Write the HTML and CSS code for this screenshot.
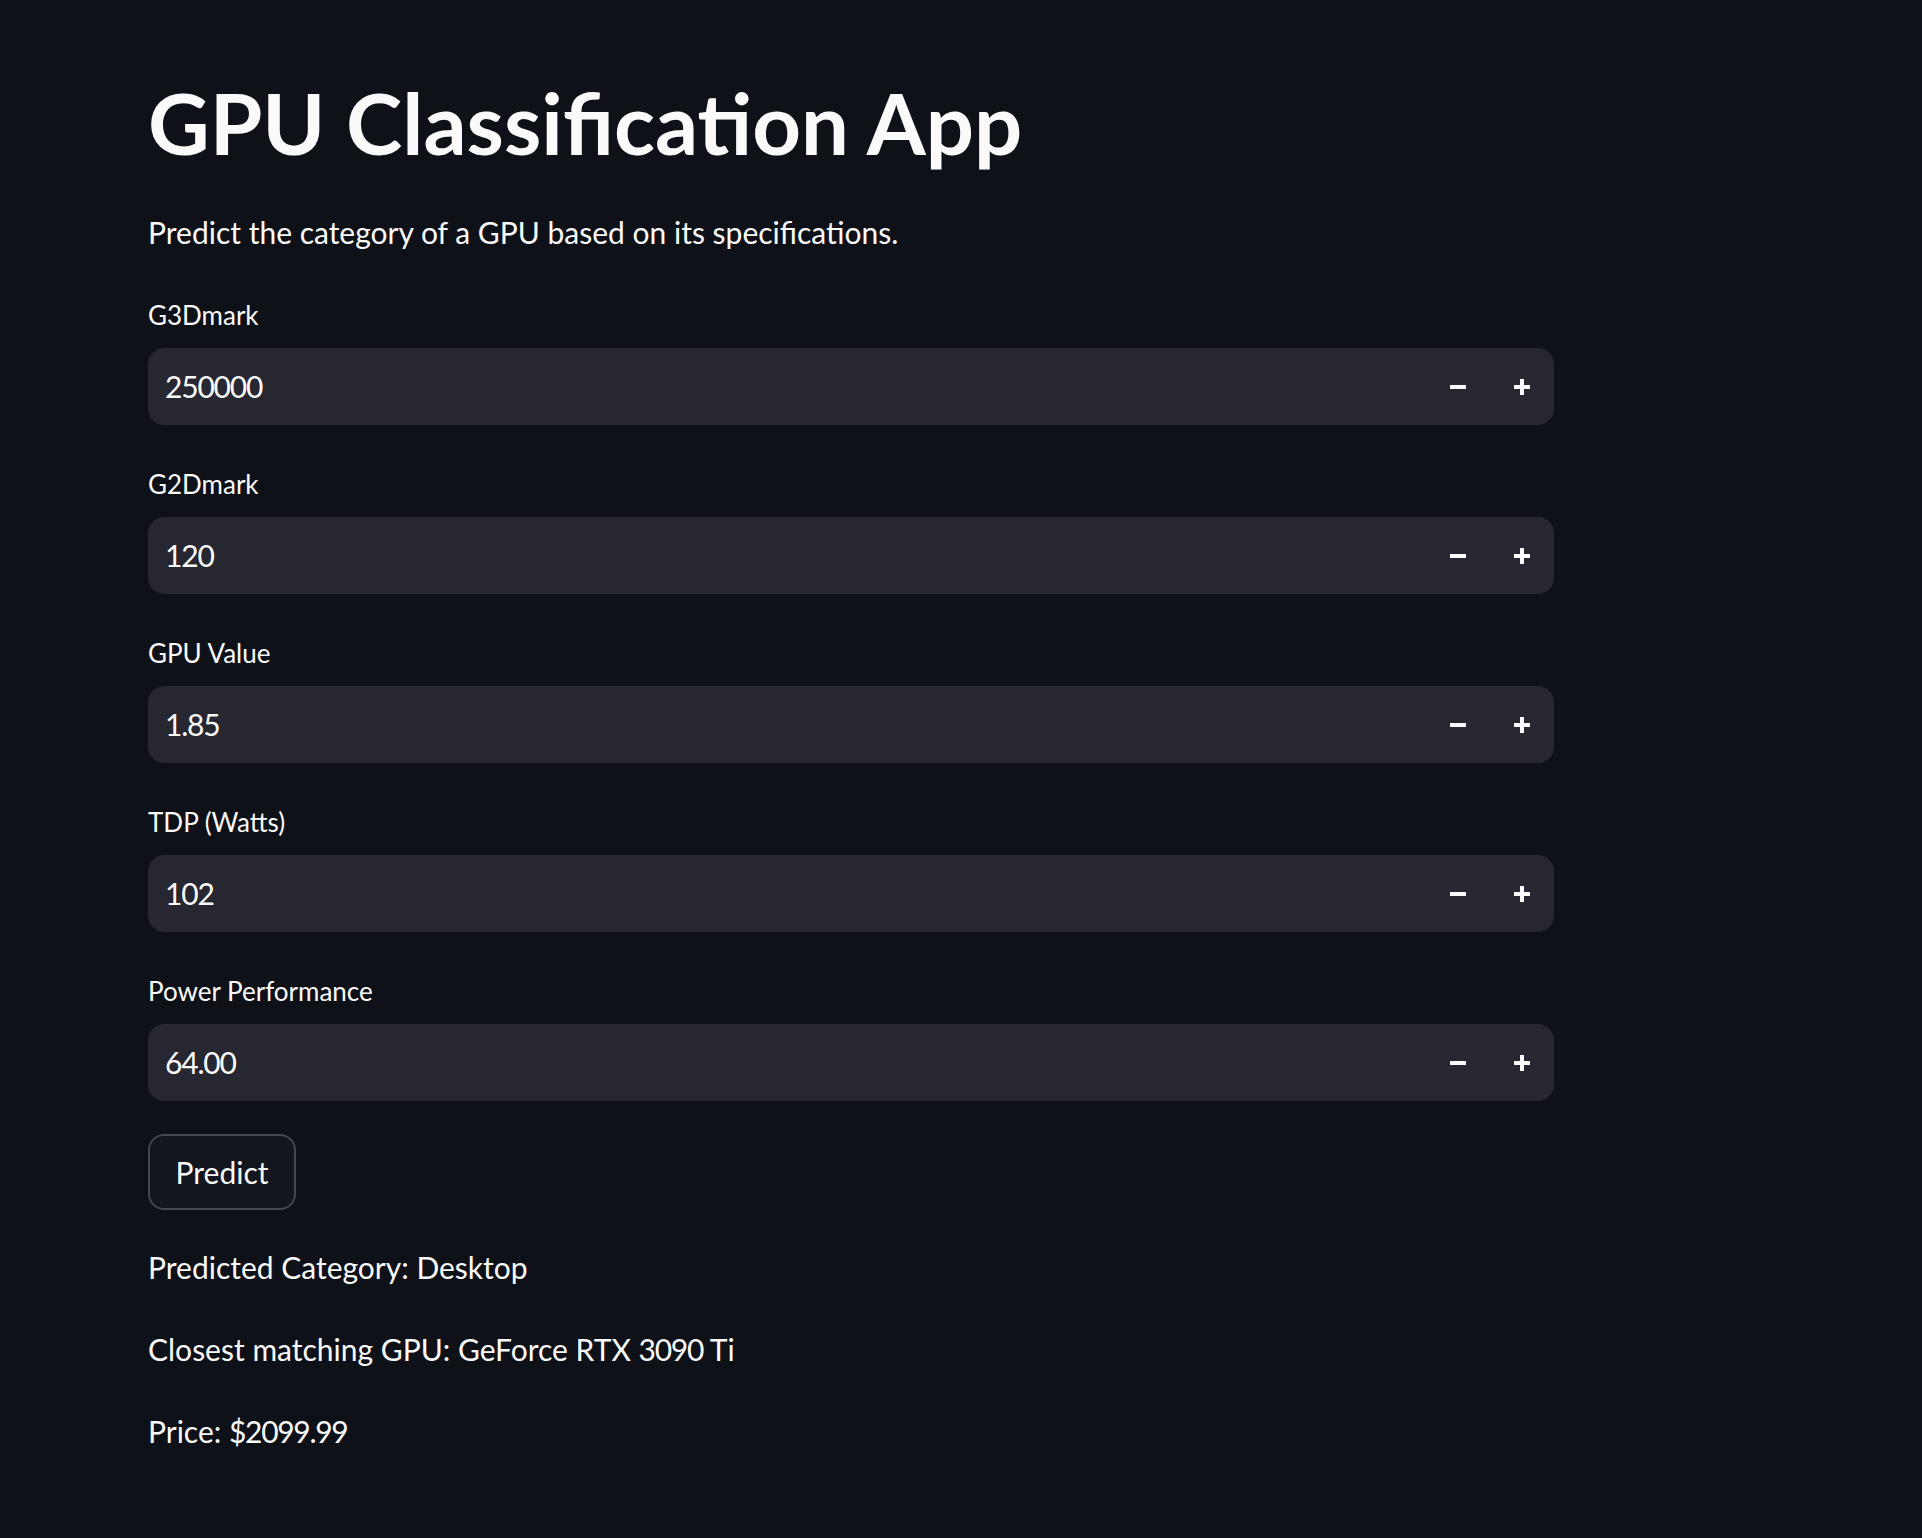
FILE: index.html
```html
<!DOCTYPE html>
<html lang="en">
<head>
<meta charset="utf-8">
<title>GPU Classification App</title>
<link rel="stylesheet" href="styles.css">
</head>
<body>
<main class="app">
  <h1 class="title">GPU Classification App</h1>
  <p class="subtitle">Predict the category of a GPU based on its specifications.</p>

  <div class="fields">
    <div class="field">
      <label class="field-label">G3Dmark</label>
      <div class="number-input">
        <span class="value">250000</span>
        <button class="step" aria-label="decrement"><svg viewBox="0 0 16 16" width="16" height="16"><rect x="0" y="6" width="16" height="4" fill="#fafafa"/></svg></button>
        <button class="step" aria-label="increment"><svg viewBox="0 0 16 16" width="16" height="16"><rect x="0" y="6" width="16" height="4" fill="#fafafa"/><rect x="6" y="0" width="4" height="16" fill="#fafafa"/></svg></button>
      </div>
    </div>
    <div class="field">
      <label class="field-label">G2Dmark</label>
      <div class="number-input">
        <span class="value">120</span>
        <button class="step" aria-label="decrement"><svg viewBox="0 0 16 16" width="16" height="16"><rect x="0" y="6" width="16" height="4" fill="#fafafa"/></svg></button>
        <button class="step" aria-label="increment"><svg viewBox="0 0 16 16" width="16" height="16"><rect x="0" y="6" width="16" height="4" fill="#fafafa"/><rect x="6" y="0" width="4" height="16" fill="#fafafa"/></svg></button>
      </div>
    </div>
    <div class="field">
      <label class="field-label">GPU Value</label>
      <div class="number-input">
        <span class="value">1.85</span>
        <button class="step" aria-label="decrement"><svg viewBox="0 0 16 16" width="16" height="16"><rect x="0" y="6" width="16" height="4" fill="#fafafa"/></svg></button>
        <button class="step" aria-label="increment"><svg viewBox="0 0 16 16" width="16" height="16"><rect x="0" y="6" width="16" height="4" fill="#fafafa"/><rect x="6" y="0" width="4" height="16" fill="#fafafa"/></svg></button>
      </div>
    </div>
    <div class="field">
      <label class="field-label">TDP (Watts)</label>
      <div class="number-input">
        <span class="value">102</span>
        <button class="step" aria-label="decrement"><svg viewBox="0 0 16 16" width="16" height="16"><rect x="0" y="6" width="16" height="4" fill="#fafafa"/></svg></button>
        <button class="step" aria-label="increment"><svg viewBox="0 0 16 16" width="16" height="16"><rect x="0" y="6" width="16" height="4" fill="#fafafa"/><rect x="6" y="0" width="4" height="16" fill="#fafafa"/></svg></button>
      </div>
    </div>
    <div class="field">
      <label class="field-label">Power Performance</label>
      <div class="number-input">
        <span class="value">64.00</span>
        <button class="step" aria-label="decrement"><svg viewBox="0 0 16 16" width="16" height="16"><rect x="0" y="6" width="16" height="4" fill="#fafafa"/></svg></button>
        <button class="step" aria-label="increment"><svg viewBox="0 0 16 16" width="16" height="16"><rect x="0" y="6" width="16" height="4" fill="#fafafa"/><rect x="6" y="0" width="4" height="16" fill="#fafafa"/></svg></button>
      </div>
    </div>
  </div>

  <button class="predict">Predict</button>

  <div class="results">
    <p class="result">Predicted Category: Desktop</p>
    <p class="result">Closest matching GPU: GeForce RTX <span class="num">3090</span> Ti</p>
    <p class="result">Price: <span class="num">$2099.99</span></p>
  </div>
</main>
</body>
</html>
```

FILE: styles.css
```css
html, body {
  margin: 0;
  padding: 0;
  background: #0e1117;
}

body {
  min-height: 1538px;
  color: #fafafa;
  font-family: Lato, "Noto Sans", sans-serif;
}

.app {
  width: 1406px;
  padding: 72px 0 0 148px;
}

.title {
  margin: 0;
  font-size: 85px;
  font-weight: 700;
  line-height: 100px;
  letter-spacing: 0;
}

.subtitle {
  margin: 40px 0 0;
  font-size: 30px;
  line-height: 40px;
}

.fields {
  display: flex;
  flex-direction: column;
  gap: 43px;
  margin-top: 47px;
}

.field {
  display: flex;
  flex-direction: column;
  gap: 17px;
}

.field-label {
  font-size: 26px;
  line-height: 32px;
}

.number-input {
  display: flex;
  align-items: center;
  height: 77px;
  background: #262730;
  border-radius: 16px;
  padding-left: 17px;
}

.value {
  flex: 1;
  font-size: 30px;
  line-height: 77px;
  letter-spacing: -1.2px;
}

.step {
  width: 64px;
  height: 77px;
  padding: 0;
  border: 0;
  background: transparent;
  display: flex;
  align-items: center;
  justify-content: center;
}

.step svg {
  display: block;
}

.predict {
  margin-top: 33px;
  width: 148px;
  height: 76px;
  padding: 0;
  border: 2px solid #44464e;
  border-radius: 16px;
  background: #13161f;
  color: #fafafa;
  font-family: Lato, "Noto Sans", sans-serif;
  font-size: 30px;
  line-height: 72px;
  display: block;
}

.results {
  display: flex;
  flex-direction: column;
  gap: 42px;
  margin-top: 37px;
}

.result {
  margin: 0;
  font-size: 30px;
  line-height: 40px;
}

.num {
  letter-spacing: -1.3px;
}
```
